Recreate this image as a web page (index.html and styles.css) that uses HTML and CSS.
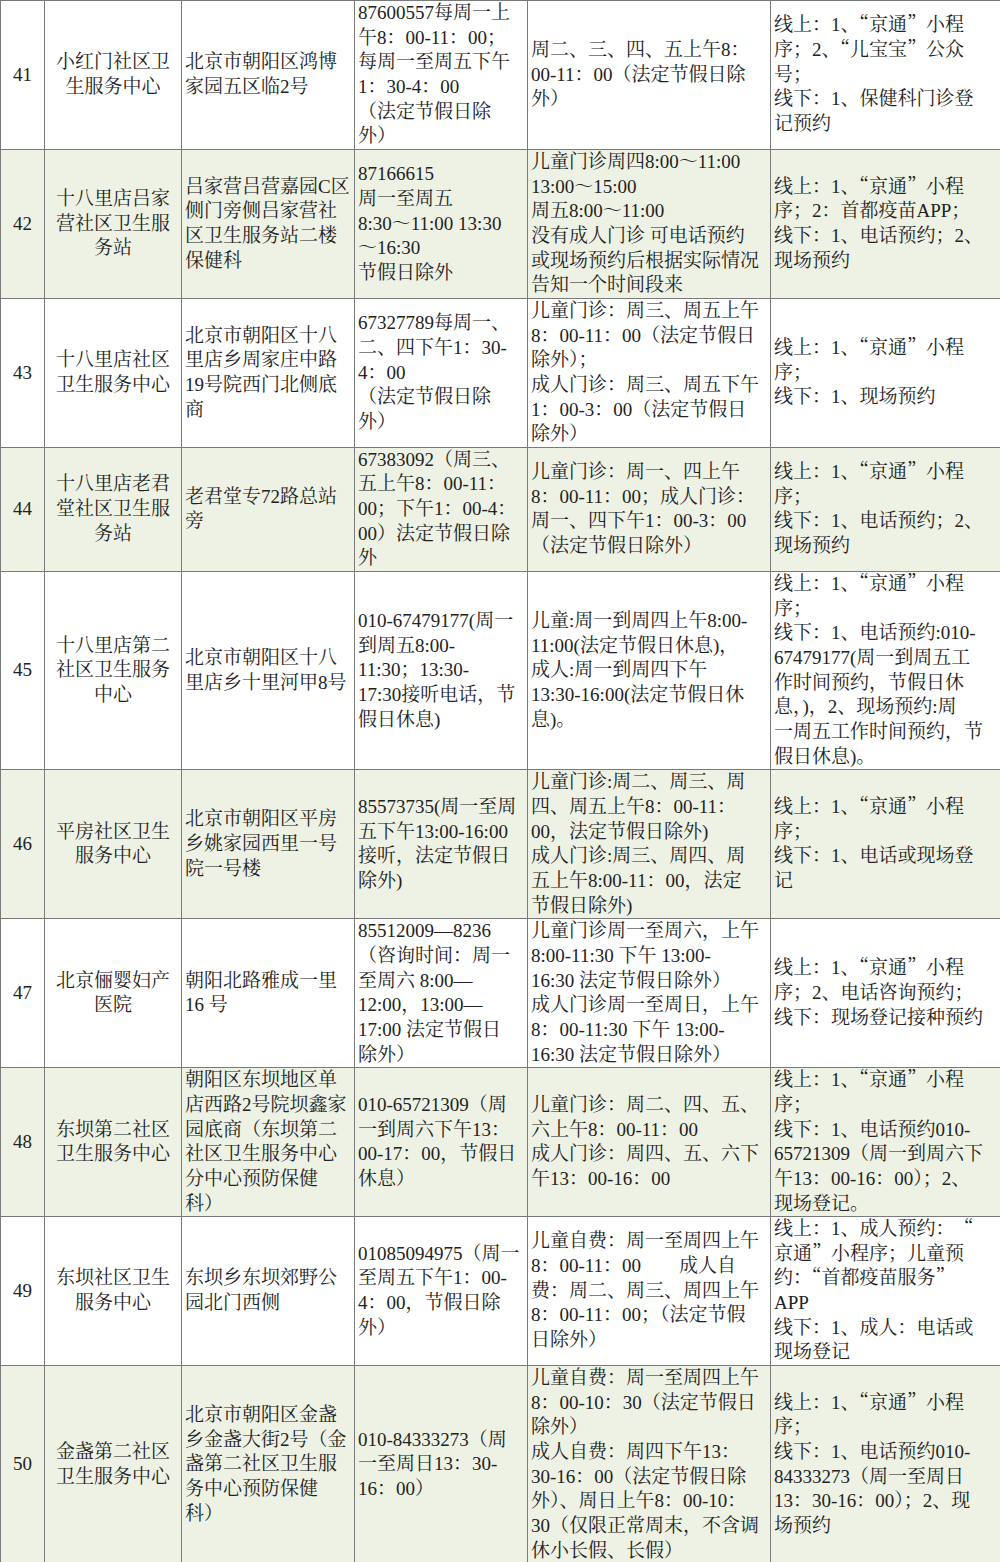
FILE: index.html
```html
<!DOCTYPE html>
<html lang="zh-CN">
<head>
<meta charset="utf-8">
<title>接种门诊信息</title>
<link rel="stylesheet" href="styles.css">
</head>
<body>
<table class="tbl">
<colgroup>
<col class="c1"><col class="c2"><col class="c3"><col class="c4"><col class="c5"><col class="c6">
</colgroup>
<tbody>
<tr class="odd">
<td class="num">41</td>
<td class="name">小红门社区卫<br>生服务中心</td>
<td>北京市朝阳区鸿博<br>家园五区临2号</td>
<td>87600557每周一上<br>午8：00-11：00；<br>每周一至周五下午<br>1：30-4：00<br>（法定节假日除<br>外）</td>
<td>周二、三、四、五上午8：<br>00-11：00（法定节假日除<br>外）</td>
<td>线上：1、<span class="cj">“京通”</span>小程<br>序；2、<span class="cj">“儿宝宝”</span>公众<br>号；<br>线下：1、保健科门诊登<br>记预约</td>
</tr>
<tr class="even">
<td class="num">42</td>
<td class="name">十八里店吕家<br>营社区卫生服<br>务站</td>
<td>吕家营吕营嘉园C区<br>侧门旁侧吕家营社<br>区卫生服务站二楼<br>保健科</td>
<td>87166615<br>周一至周五<br>8:30～11:00 13:30<br>～16:30<br>节假日除外</td>
<td>儿童门诊周四8:00～11:00<br>13:00～15:00<br>周五8:00～11:00<br>没有成人门诊 可电话预约<br>或现场预约后根据实际情况<br>告知一个时间段来</td>
<td>线上：1、<span class="cj">“京通”</span>小程<br>序；2：首都疫苗APP；<br>线下：1、电话预约；2、<br>现场预约</td>
</tr>
<tr class="odd">
<td class="num">43</td>
<td class="name">十八里店社区<br>卫生服务中心</td>
<td>北京市朝阳区十八<br>里店乡周家庄中路<br>19号院西门北侧底<br>商</td>
<td>67327789每周一、<br>二、四下午1：30-<br>4：00<br>（法定节假日除<br>外）</td>
<td>儿童门诊：周三、周五上午<br>8：00-11：00（法定节假日<br>除外）；<br>成人门诊：周三、周五下午<br>1：00-3：00（法定节假日<br>除外）</td>
<td>线上：1、<span class="cj">“京通”</span>小程<br>序；<br>线下：1、现场预约</td>
</tr>
<tr class="even">
<td class="num">44</td>
<td class="name">十八里店老君<br>堂社区卫生服<br>务站</td>
<td>老君堂专72路总站<br>旁</td>
<td>67383092（周三、<br>五上午8：00-11：<br>00；下午1：00-4：<br>00）法定节假日除<br>外</td>
<td>儿童门诊：周一、四上午<br>8：00-11：00；成人门诊：<br>周一、四下午1：00-3：00<br>（法定节假日除外）</td>
<td>线上：1、<span class="cj">“京通”</span>小程<br>序；<br>线下：1、电话预约；2、<br>现场预约</td>
</tr>
<tr class="odd">
<td class="num">45</td>
<td class="name">十八里店第二<br>社区卫生服务<br>中心</td>
<td>北京市朝阳区十八<br>里店乡十里河甲8号</td>
<td>010-67479177(周一<br>到周五8:00-<br>11:30；13:30-<br>17:30接听电话，节<br>假日休息)</td>
<td>儿童:周一到周四上午8:00-<br>11:00(法定节假日休息)，<br>成人:周一到周四下午<br>13:30-16:00(法定节假日休<br>息)。</td>
<td>线上：1、<span class="cj">“京通”</span>小程<br>序；<br>线下：1、电话预约:010-<br>67479177(周一到周五工<br>作时间预约，节假日休<br>息，)，2、现场预约:周<br>一周五工作时间预约，节<br>假日休息)。</td>
</tr>
<tr class="even">
<td class="num">46</td>
<td class="name">平房社区卫生<br>服务中心</td>
<td>北京市朝阳区平房<br>乡姚家园西里一号<br>院一号楼</td>
<td>85573735(周一至周<br>五下午13:00-16:00<br>接听，法定节假日<br>除外)</td>
<td>儿童门诊:周二、周三、周<br>四、周五上午8：00-11：<br>00，法定节假日除外)<br>成人门诊:周三、周四、周<br>五上午8:00-11：00，法定<br>节假日除外)</td>
<td>线上：1、<span class="cj">“京通”</span>小程<br>序；<br>线下：1、电话或现场登<br>记</td>
</tr>
<tr class="odd">
<td class="num">47</td>
<td class="name">北京俪婴妇产<br>医院</td>
<td>朝阳北路雅成一里<br>16 号</td>
<td>85512009—8236<br>（咨询时间：周一<br>至周六 8:00—<br>12:00，13:00—<br>17:00 法定节假日<br>除外）</td>
<td>儿童门诊周一至周六，上午<br>8:00-11:30 下午 13:00-<br>16:30 法定节假日除外）<br>成人门诊周一至周日，上午<br>8：00-11:30 下午 13:00-<br>16:30 法定节假日除外）</td>
<td>线上：1、<span class="cj">“京通”</span>小程<br>序；2、电话咨询预约；<br>线下：现场登记接种预约</td>
</tr>
<tr class="even">
<td class="num">48</td>
<td class="name">东坝第二社区<br>卫生服务中心</td>
<td>朝阳区东坝地区单<br>店西路2号院坝鑫家<br>园底商（东坝第二<br>社区卫生服务中心<br>分中心预防保健<br>科）</td>
<td>010-65721309（周<br>一到周六下午13：<br>00-17：00，节假日<br>休息）</td>
<td>儿童门诊：周二、四、五、<br>六上午8：00-11：00<br>成人门诊：周四、五、六下<br>午13：00-16：00</td>
<td>线上：1、<span class="cj">“京通”</span>小程<br>序；<br>线下：1、电话预约010-<br>65721309（周一到周六下<br>午13：00-16：00）；2、<br>现场登记。</td>
</tr>
<tr class="odd">
<td class="num">49</td>
<td class="name">东坝社区卫生<br>服务中心</td>
<td>东坝乡东坝郊野公<br>园北门西侧</td>
<td>01085094975（周一<br>至周五下午1：00-<br>4：00，节假日除<br>外）</td>
<td>儿童自费：周一至周四上午<br>8：00-11：00　　成人自<br>费：周二、周三、周四上午<br>8：00-11：00；（法定节假<br>日除外）</td>
<td>线上：1、成人预约：　<span class="cj">“</span><br><span class="cj">京通”</span>小程序；儿童预<br>约：<span class="cj">“首都疫苗服务”</span><br>APP<br>线下：1、成人：电话或<br>现场登记</td>
</tr>
<tr class="even">
<td class="num">50</td>
<td class="name">金盏第二社区<br>卫生服务中心</td>
<td>北京市朝阳区金盏<br>乡金盏大街2号（金<br>盏第二社区卫生服<br>务中心预防保健<br>科）</td>
<td>010-84333273（周<br>一至周日13：30-<br>16：00）</td>
<td>儿童自费：周一至周四上午<br>8：00-10：30（法定节假日<br>除外）<br>成人自费：周四下午13：<br>30-16：00（法定节假日除<br>外）、周日上午8：00-10：<br>30（仅限正常周末，不含调<br>休小长假、长假）</td>
<td>线上：1、<span class="cj">“京通”</span>小程<br>序；<br>线下：1、电话预约010-<br>84333273（周一至周日<br>13：30-16：00）；2、现<br>场预约</td>
</tr>
</tbody>
</table>
</body>
</html>
```

FILE: styles.css
```css
html, body {
  margin: 0;
  padding: 0;
  background: #ffffff;
}

body {
  font-family: "Liberation Serif", "Noto Serif CJK SC", "Noto Sans CJK SC", serif;
  font-size: 19px;
  line-height: 24.65px;
  color: #222222;
}

.tbl {
  width: 1000px;
  border-collapse: collapse;
  table-layout: fixed;
}

.c1 { width: 44px; }
.c2 { width: 137px; }
.c3 { width: 173px; }
.c4 { width: 173px; }
.c5 { width: 243px; }
.c6 { width: 230px; }

.tbl td {
  border: 1px solid #7a7a7a;
  padding: 0 0 0 3px;
  vertical-align: middle;
  text-align: left;
  white-space: nowrap;
}

.tbl td.num,
.tbl td.name {
  text-align: center;
  padding: 0;
}

.odd { background: #ffffff; }
.even { background: #eef2e5; }

.cj {
  font-family: "Noto Serif CJK SC", "Noto Sans CJK SC", serif;
  line-height: 1;
}
```
